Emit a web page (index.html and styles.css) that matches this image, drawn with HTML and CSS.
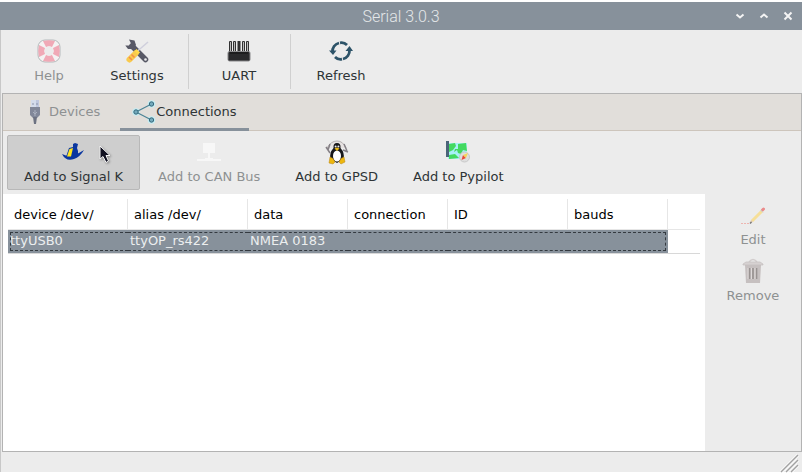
FILE: index.html
```html
<!DOCTYPE html>
<html lang="en">
<head>
<meta charset="utf-8">
<title>Serial 3.0.3</title>
<link rel="stylesheet" href="styles.css">
</head>
<body>
<div class="window">
  <header class="titlebar">
    <h1>Serial 3.0.3</h1>
    <div class="controls">
      <button type="button" aria-label="Minimize"><svg width="10" height="10" viewBox="0 0 10 10"><path d="M1.500 3.500 5 6.500 8.500 3.500"/></svg></button>
      <button type="button" aria-label="Maximize"><svg width="10" height="10" viewBox="0 0 10 10"><path d="M1.500 6.500 5 3.500 8.500 6.500"/></svg></button>
      <button type="button" aria-label="Close"><svg width="10" height="10" viewBox="0 0 10 10"><path d="M1.500 1.500 8.500 8.500M8.500 1.500 1.500 8.500"/></svg></button>
    </div>
  </header>

  <nav class="toolbar main-tools">
    <button type="button" class="tool" disabled>
      <svg width="24" height="24" viewBox="0 0 24 24">
        <rect x="1" y="1" width="22" height="22" rx="7" fill="#f4f2f2" stroke="#b4babc"/>
        <path d="M6 2Q12 .5 18 2L15 8Q12 6.500 9 8zM6 22Q12 23.500 18 22L15 16Q12 17.500 9 16zM2 6Q.5 12 2 18L8 15Q6.500 12 8 9zM22 6Q23.500 12 22 18L16 15Q17.500 12 16 9z" fill="#f0a9b6"/>
        <circle cx="12" cy="12" r="4.500" fill="#ececec"/>
      </svg>
      <span>Help</span>
    </button>
    <button type="button" class="tool">
      <svg width="24" height="24" viewBox="0 0 24 24">
        <path d="M7 7 20.500 20.500" stroke="#585966" stroke-width="5.500" stroke-linecap="round"/>
        <path d="M4 .5 9.500 1.500 11 6 8 10 3 10 .3 6.500 4 6.500 6 4.500z" fill="#585966"/>
        <circle cx="20.500" cy="20.500" r="1.300" fill="#eee"/>
        <path d="M12 12.500 23 3" stroke="#cfcfdc" stroke-width="1.500"/>
        <path d="M4.500 20.500 10.500 14.500" stroke="#f9ca4c" stroke-width="6" stroke-linecap="round"/>
        <path d="M10.500 11 14 14.500" stroke="#ffd84a" stroke-width="3"/>
        <path d="M4 18 7 21M6.500 15.500 9.500 18.500" stroke="#f48c4a" stroke-width="1.500"/>
      </svg>
      <span>Settings</span>
    </button>
    <i class="separator"></i>
    <button type="button" class="tool">
      <svg width="24" height="24" viewBox="0 0 24 24">
        <path d="M2.500 13V2.500H4.500V13M6.500 13V2.500H8.500V13M15.500 13V2.500H17.500V13M19.500 13V2.500H21.500V13" fill="#bbb" stroke="#333"/>
        <path d="M12 2V13" stroke="#333" stroke-width="3"/>
        <rect x="1" y="12.500" width="22" height="9.500" rx="1.500" fill="#29292b" stroke="#88888a"/>
        <path d="M3 14H21" stroke="#111"/>
      </svg>
      <span>UART</span>
    </button>
    <i class="separator"></i>
    <button type="button" class="tool">
      <svg width="24" height="24" viewBox="0 0 24 24">
        <path d="M3.500 13A8.500 8.500 0 0 1 10 4M11 3.800Q15 3 18 6M20.500 11A8.500 8.500 0 0 1 14 20M13 20.200Q9 21 6 18" fill="none" stroke="#2d5368" stroke-width="2.800"/>
        <path d="M0 11.500H7.500L4 16zM16.500 12 20.500 7 24 12z" fill="#2d5368"/>
      </svg>
      <span>Refresh</span>
    </button>
  </nav>

  <main class="panel">
    <div class="tabs" role="tablist">
      <button type="button" class="tab tab-devices" role="tab" aria-selected="false">
        <svg width="24" height="24" viewBox="0 0 24 24">
          <path d="M8 0H16V8H8z" fill="#d4dcec"/><path d="M13 0H16V8H13z" fill="#bec7df"/>
          <path d="M10 3V5M14 3V5" stroke="#8c94aa"/>
          <path d="M7 7H17V15L14 18H10L7 15z" fill="#818799"/>
          <path d="M10 17H14L13 24H11z" fill="#6d7282"/><path d="M12 10V16M10 12 12 14 14 12" stroke="#aab0bf" fill="none"/>
        </svg>
        <span>Devices</span>
      </button>
      <button type="button" class="tab active" role="tab" aria-selected="true">
        <svg width="24" height="24" viewBox="0 0 24 24">
          <g fill="#c5edf3"><circle cx="4" cy="12" r="3.800"/><circle cx="19.500" cy="4" r="3.800"/><circle cx="19.500" cy="20" r="3.800"/></g>
          <path d="M19.500 4 4 12 19.500 20" fill="none" stroke="#4c8496" stroke-width="1.200"/>
          <g fill="#73aabc" stroke="#35687b"><circle cx="4" cy="12" r="2.200"/><circle cx="19.500" cy="4" r="2.200"/><circle cx="19.500" cy="20" r="2.200"/></g>
        </svg>
        <span>Connections</span>
      </button>
    </div>

    <div class="toolbar connection-tools">
      <button type="button" class="tool hovered">
        <svg width="24" height="24" viewBox="0 0 24 24">
          <path d="M0 14Q6 17 11 15.500T22 10Q18 17 12 19Q4 22 0 14z" fill="#0b37a0"/>
          <path d="M4 17 7 8 11 7 11 4 13 3 16 4 15 8 16 11 16 16 8 19z" fill="#0b37a0"/>
          <path d="M5 16.500 7.500 9 11 8 9 16.500z" fill="#ffe51e"/>
        </svg>
        <span>Add to Signal K</span>
        <svg class="pointer" width="14" height="19" viewBox="0 0 14 19">
          <path d="M1 1V14L4 11.500 7 17.500 9.500 16 7 10.500H11z" fill="#101020" stroke="#f5f5f5"/>
        </svg>
      </button>
      <button type="button" class="tool" disabled>
        <svg width="24" height="24" viewBox="0 0 24 24">
          <path d="M6 3H18V13H13V18H16V19H24V21H0V19H8V18H11V13H6z" fill="#f7f7f7"/>
        </svg>
        <span>Add to CAN Bus</span>
      </button>
      <button type="button" class="tool">
        <svg width="24" height="24" viewBox="0 0 24 24">
          <path d="M2 8Q6 1 12 1T21 8" fill="#e6e2e2" stroke="#b4afaf"/>
          <path d="M1 7 5 13M18 10 23 12M5 4 3 10M19 4 22 11" stroke="#858086" stroke-width="1.500"/>
          <path d="M12 3Q16 3 15.500 8Q20 13 18.500 19L12 23 5.500 19Q4 13 8.500 8Q8 3 12 3z" fill="#17171a"/>
          <ellipse cx="12" cy="16" rx="4" ry="5.500" fill="#fff"/>
          <circle cx="10.600" cy="6.500" r="1" fill="#eee"/><circle cx="13.400" cy="6.500" r="1" fill="#eee"/>
          <path d="M9.500 8.500 12 7.500 14.500 8.500 12 11z" fill="#e9b714"/>
          <path d="M5 17 8 18.500 10 22 8 24 4 23zM19 17 16 18.500 14 22 16 24 20 22z" fill="#edb70f" stroke="#b78315" stroke-width=".5"/>
        </svg>
        <span>Add to GPSD</span>
      </button>
      <button type="button" class="tool">
        <svg width="24" height="24" viewBox="0 0 24 24">
          <path d="M2 3H21V19H2z" fill="#a7f0f7"/>
          <path d="M3 4 9 3 10 6 7 10 3 12zM12 4 20 3 21 11 17 10 15 14 12 13 11 10 8 12 9 9 12 9zM3 15 9 14 13 18 3 19z" fill="#43d95f"/>
          <path d="M0 1H3V17H0z" fill="#4b6479"/>
          <circle cx="18.500" cy="17" r="5" fill="#dedede" stroke="#c8c8c8"/>
          <path d="M15.500 20 17 15 20 18z" fill="#e9483a"/><path d="M17 15 22 13 20 18z" fill="#f4d45a"/>
        </svg>
        <span>Add to Pypilot</span>
      </button>
    </div>

    <div class="content">
      <div class="list">
        <table>
          <colgroup><col class="wide"><col class="wide"><col class="narrow"><col class="narrow"><col class="wide"><col class="narrow"><col></colgroup>
          <thead><tr><th>device /dev/</th><th>alias /dev/</th><th>data</th><th>connection</th><th>ID</th><th>bauds</th><td></td></tr></thead>
          <tbody><tr class="selected"><td>ttyUSB0</td><td>ttyOP_rs422</td><td>NMEA 0183</td><td></td><td></td><td class="last"></td><td class="rest"></td></tr></tbody>
        </table>
      </div>
      <aside class="actions">
        <button type="button" class="tool" disabled>
          <svg width="24" height="24" viewBox="0 0 24 24">
            <path d="M11 18 21 8" stroke="#f6df98" stroke-width="3"/><path d="M21.500 7 22.500 6" stroke="#ea8b8b" stroke-width="3" stroke-linecap="round"/>
            <path d="M19.500 7 22 9.500" stroke="#c9d4d8"/><path d="M9 20 10 17 12 19z" fill="#ddc6ad"/><path d="M9 20.500 10.500 19" stroke="#777" stroke-width="1.500"/>
            <path d="M0 20.500H8" stroke="#edb5b0" stroke-dasharray="2 1"/>
          </svg>
          <span>Edit</span>
        </button>
        <button type="button" class="tool" disabled>
          <svg width="24" height="24" viewBox="0 0 24 24">
            <path d="M8 3Q12-2 16 3" fill="none" stroke="#d2cdcd" stroke-width="1.500"/>
            <path d="M4 6H20L19 24H5z" fill="#c6c0c0"/>
            <path d="M2 5 5 3H19L22 5V6H2z" fill="#d6d1d1" stroke="#c4bebe" stroke-width=".7"/>
            <path d="M8.500 9V20M12 9V20M15.500 9V20" stroke="#999392" stroke-width="1.700"/><path d="M7 9V20M10.500 9V20M14 9V20" stroke="#dfdada"/>
          </svg>
          <span>Remove</span>
        </button>
      </aside>
    </div>
  </main>

  <footer class="statusbar">
    <svg width="18" height="18" viewBox="0 0 18 18"><path d="M0 18 17 1M5 18 17 6M10 18 17 11" stroke="#fff" stroke-width="3"/><path d="M0 18 17 1M5 18 17 6M10 18 17 11" stroke="#a2a2a2" stroke-width="1.500"/></svg>
  </footer>
</div>
</body>
</html>
```
FILE: styles.css
```css
* {
  box-sizing: border-box;
}

body {
  margin: 0;
  height: 100vh;
  padding: 2px 0;
  background: #fff;
  color: #2e3436;
  font: 13px/16px "DejaVu Sans", sans-serif;
}

button {
  margin: 0;
  padding: 0;
  border: 0;
  background: none;
  color: inherit;
  font: inherit;
}

svg {
  display: block;
  flex: none;
  overflow: visible;
}

.window {
  display: flex;
  flex-direction: column;
  height: 100%;
  border-left: 1px solid #c8c8c8;
  background: #ececec;
}

.titlebar {
  display: grid;
  grid-template-columns: 1fr auto 1fr;
  align-items: center;
  height: 28px;
  margin-left: -1px;
  padding: 0 9px;
  background: #87919b;
  color: #e4e7e9;
}

.titlebar h1 {
  grid-column: 2;
  margin: 0;
  padding-top: 2px;
  font: 300 16px/26px Roboto, sans-serif;
}

.controls {
  display: flex;
  justify-content: flex-end;
  gap: 14px;
}

.controls path {
  fill: none;
  stroke: #f4f4f4;
  stroke-width: 2;
}

.toolbar {
  display: flex;
}

.main-tools {
  padding: 4px;
}

.tool {
  display: flex;
  flex-direction: column;
  align-items: center;
  gap: 5px;
  height: 55px;
  padding: 4px 16px;
  border: 1px solid transparent;
}

.tool:disabled,
.tab-devices {
  color: #8e9192;
}

.main-tools .tool {
  width: 88px;
}

.separator {
  width: 1px;
  margin: 0 6px 0 7px;
  background: #d0d0d0;
}

.panel {
  display: flex;
  flex: 1;
  flex-direction: column;
  margin-left: 1px;
  border: 1px solid #b3b3b3;
}

.tabs {
  display: flex;
  height: 37px;
  border-bottom: 1px solid #cdc5bc;
  background: #e1deda;
}

.tab {
  display: flex;
  align-items: center;
  height: 37px;
  padding: 2px 12px 0;
  border-bottom: 3px solid transparent;
}

.tab-devices {
  padding: 2px 20px 0;
}

.tab-devices span {
  margin-left: 2px;
}

.tab.active {
  border-color: #87919b;
}

.connection-tools {
  gap: 1px;
  padding: 4px;
}

.tool.hovered {
  position: relative;
  border-color: #b8b8b8;
  border-radius: 2px;
  background: #cecece;
}

.pointer {
  position: absolute;
  top: 9px;
  left: 91px;
  filter: drop-shadow(1px 1px 1px #888);
}

.content {
  display: flex;
  flex: 1;
}

.list {
  flex: 1;
  padding: 5px;
  background: #fff;
}

table {
  width: 100%;
  border-collapse: separate;
  border-spacing: 0;
  table-layout: fixed;
}

.wide {
  width: 120px;
}

.narrow {
  width: 100px;
}

th {
  height: 31px;
  padding: 2px 6px 0;
  border-right: 1px solid #e6e6e6;
  color: #000;
  font-weight: normal;
  text-align: left;
}

thead td {
  padding: 0;
}

th,
thead td {
  border-bottom: 1px solid #e6e6e6;
}

tbody td {
  position: relative;
  height: 24px;
  padding: 0 2px 2px;
  border-bottom: 1px solid #d8d8d8;
}

.selected {
  color: #eceeef;
}

.selected td:not(.rest) {
  background: #87919b;
}

.selected td:not(.rest)::after {
  content: "";
  position: absolute;
  inset: 2px 0;
  border: dashed #343a40;
  border-width: 1px 0;
}

.selected td:first-child::after {
  left: 2px;
  border-left-width: 1px;
}

.selected td.last::after {
  right: 2px;
  border-right-width: 1px;
}

.actions {
  width: 96px;
  padding: 4px 3px;
}

.actions .tool {
  width: 100%;
  height: 56px;
}

.statusbar {
  display: flex;
  align-items: flex-end;
  justify-content: flex-end;
  height: 20px;
  padding-right: 3px;
}
```
